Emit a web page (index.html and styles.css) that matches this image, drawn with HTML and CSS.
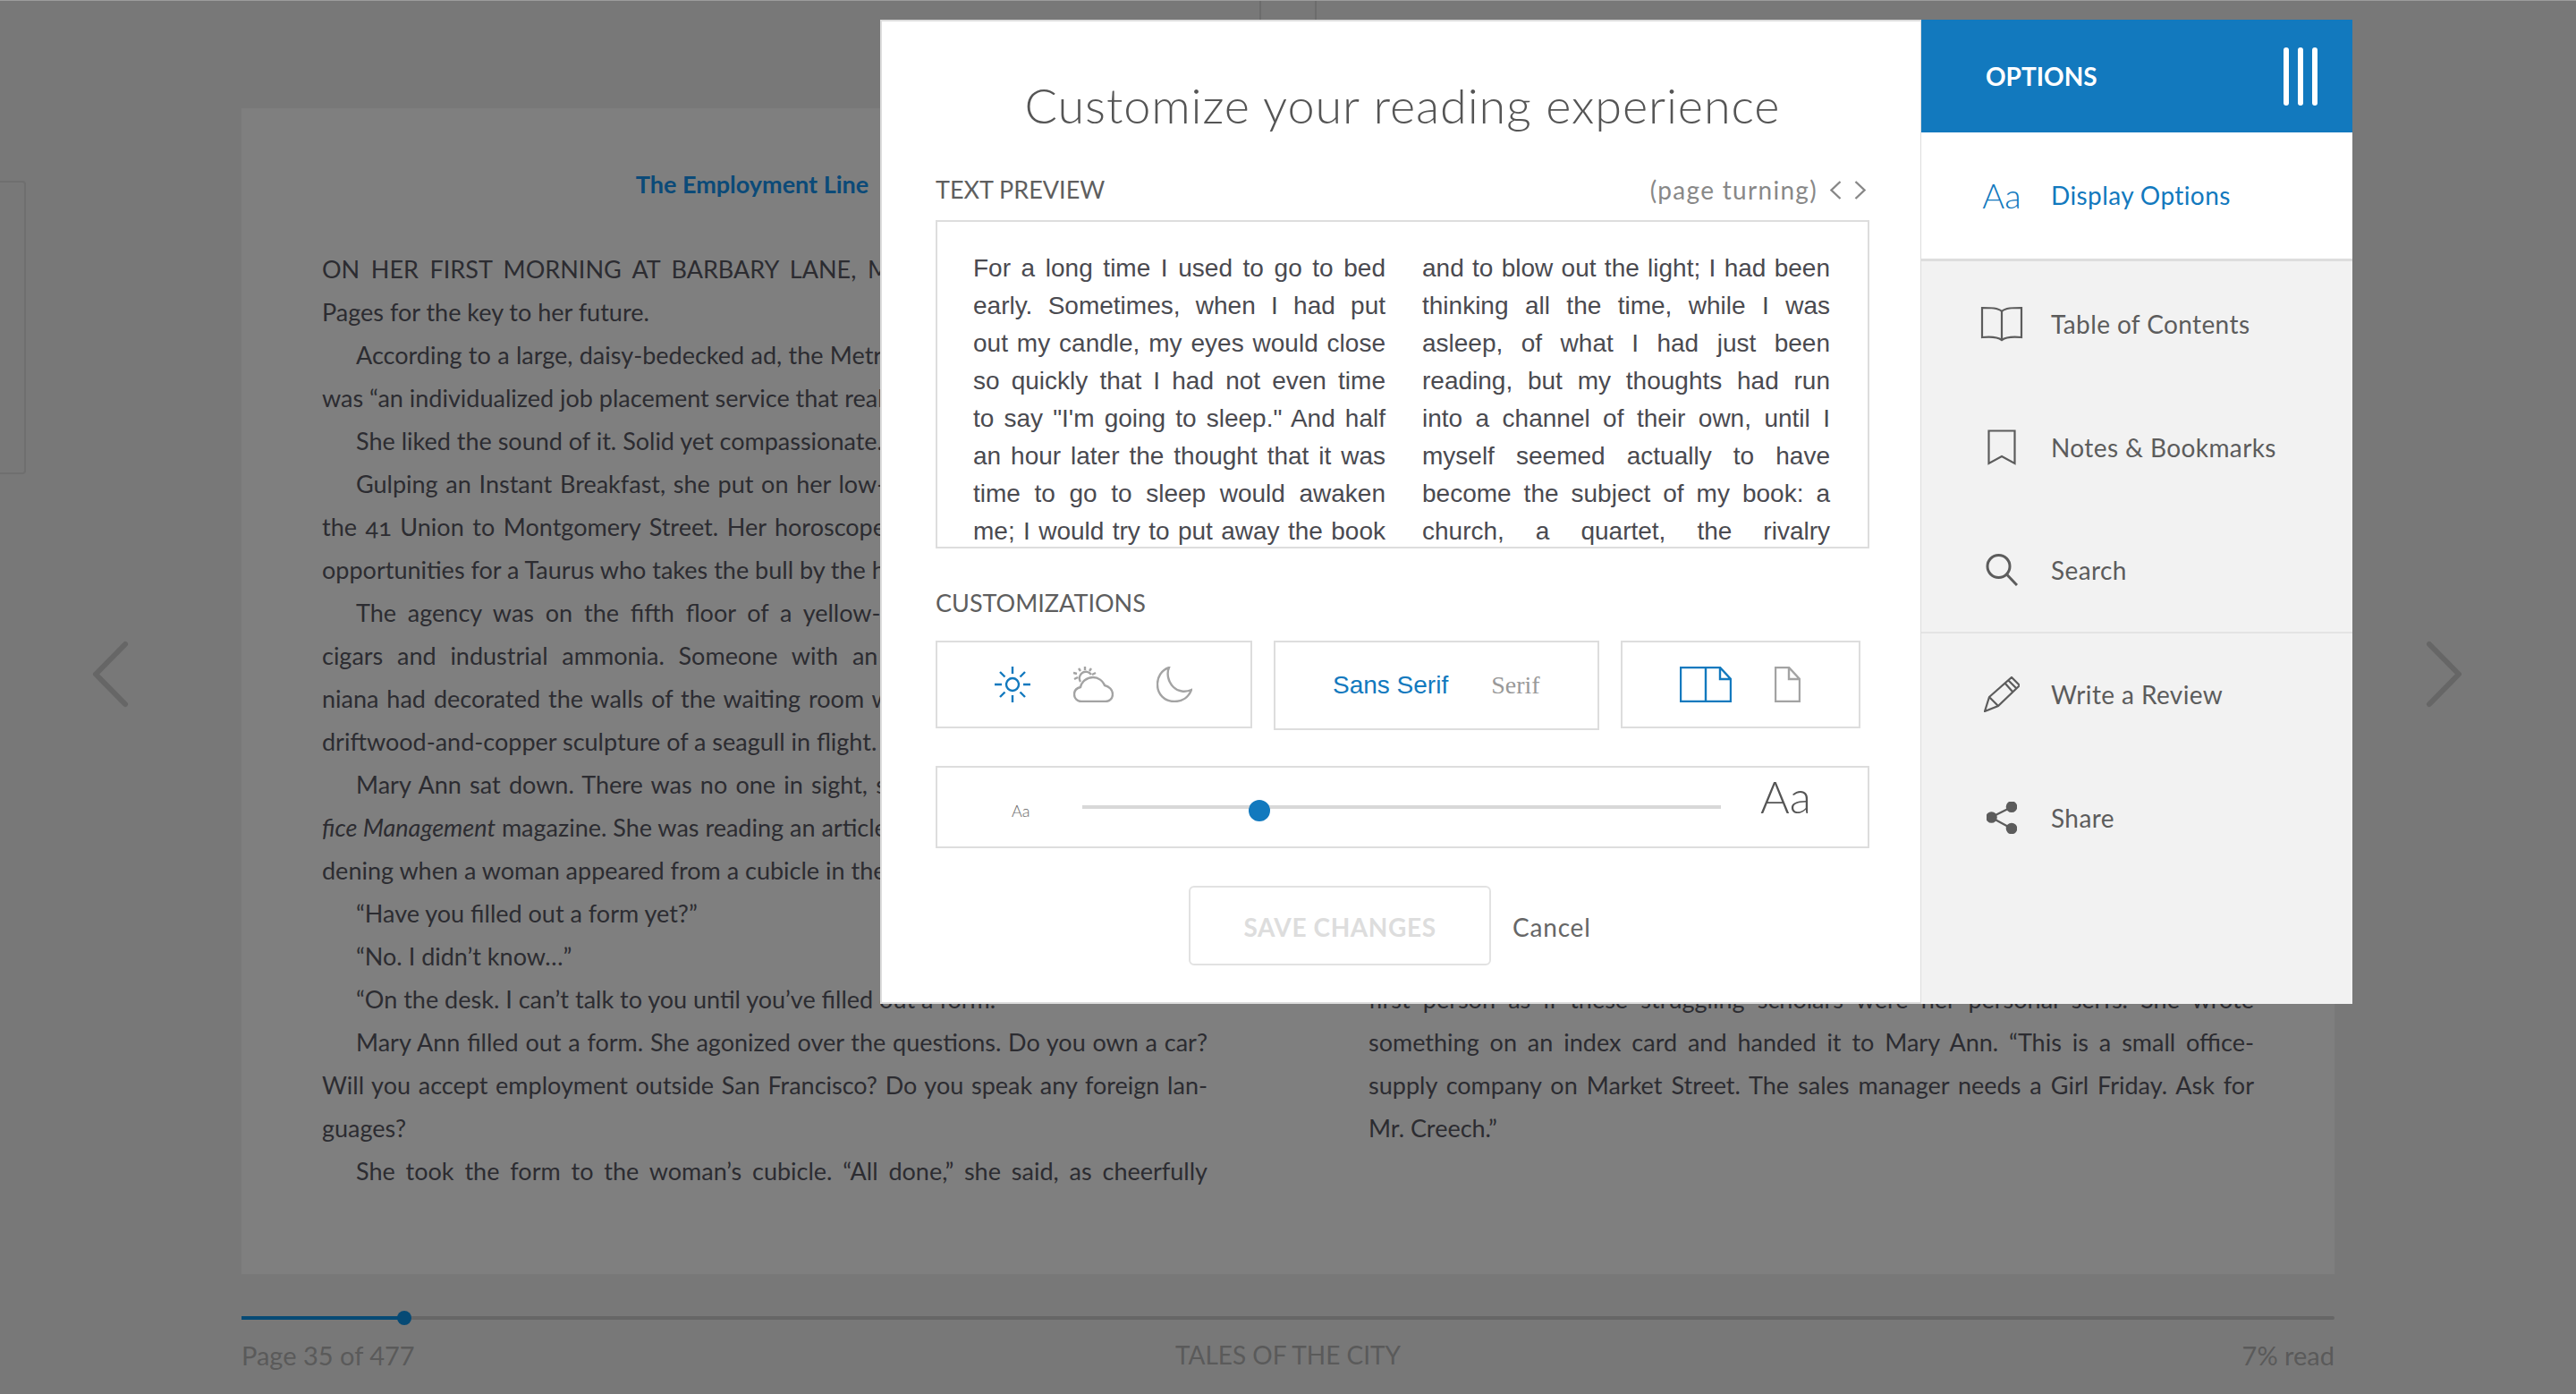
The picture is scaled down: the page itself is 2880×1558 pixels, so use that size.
FILE: index.html
```html
<!DOCTYPE html>
<html lang="en">

<head>
    <meta charset="UTF-8">
    <title>Tales of the City</title>
    <link rel="stylesheet" href="styles.css">
</head>

<body>
    <div class="side-tab"></div>
    <svg class="turn turn-left" width="42" height="75" viewBox="0 0 42 75"><path d="M38 4 L5 37.5 L38 71"/></svg>
    <svg class="turn turn-right" width="42" height="75" viewBox="0 0 42 75"><path d="M4 4 L37 37.5 L4 71"/></svg>

    <header class="topbar">
        <div class="top-btn"></div>
    </header>

    <main class="page">
        <section class="col">
            <h2 class="chapter">The Employment Line</h2>
            <div class="ln j first">ON HER FIRST MORNING AT BARBARY LANE, Mary Ann searched the Yellow</div>
            <div class="ln">Pages for the key to her future.</div>
            <div class="ln j in">According to a large, daisy-bedecked ad, the Metropolitan Personnel Agency Inc.</div>
            <div class="ln">was “an individualized job placement service that really cares.”</div>
            <div class="ln in">She liked the sound of it. Solid yet compassionate.</div>
            <div class="ln j in">Gulping an Instant Breakfast, she put on her low-heeled shoes and then caught</div>
            <div class="ln j">the 41 Union to Montgomery Street. Her horoscope in today’s Chronicle spoke of</div>
            <div class="ln">opportunities for a Taurus who takes the bull by the horns.</div>
            <div class="ln j in">The agency was on the fifth floor of a yellow-brick building that smelled of</div>
            <div class="ln j">cigars and industrial ammonia. Someone with an abiding appetite for Califor-</div>
            <div class="ln j">niana had decorated the walls of the waiting room with a large and rather hideous</div>
            <div class="ln">driftwood-and-copper sculpture of a seagull in flight.</div>
            <div class="ln j in">Mary Ann sat down. There was no one in sight, so she picked up a copy of <em>Of-</em></div>
            <div class="ln j"><em>fice Management</em> magazine. She was reading an article about indoor rooftop office gar-</div>
            <div class="ln">dening when a woman appeared from a cubicle in the corner.</div>
            <div class="ln in">“Have you filled out a form yet?”</div>
            <div class="ln in">“No. I didn’t know…”</div>
            <div class="ln in">“On the desk. I can’t talk to you until you’ve filled out a form.”</div>
            <div class="ln j in">Mary Ann filled out a form. She agonized over the questions. Do you own a car?</div>
            <div class="ln j">Will you accept employment outside San Francisco? Do you speak any foreign lan-</div>
            <div class="ln">guages?</div>
            <div class="ln j in">She took the form to the woman’s cubicle. “All done,” she said, as cheerfully</div>
        </section>
        <section class="col col-right">
            <div class="ln j">first person as if these struggling scholars were her personal serfs. She wrote</div>
            <div class="ln j">something on an index card and handed it to Mary Ann. “This is a small office-</div>
            <div class="ln j">supply company on Market Street. The sales manager needs a Girl Friday. Ask for</div>
            <div class="ln">Mr. Creech.”</div>
        </section>
    </main>

    <div class="progress">
        <div class="progress-fill"><span class="progress-knob"></span></div>
    </div>

    <footer class="status">
        <span>Page 35 of 477</span>
        <span class="status-title">TALES OF THE CITY</span>
        <span class="status-read">7% read</span>
    </footer>

    <!-- Modal -->
    <div class="modal">
        <div class="modal-main">
            <h1>Customize your reading experience</h1>

            <div class="preview-head">
                <span class="label">TEXT PREVIEW</span>
                <span class="turning">(page turning)
                    <svg width="13" height="21" viewBox="0 0 13 21"><path d="M11.5 1 L1.5 10.5 L11.5 20"/></svg>
                    <svg width="13" height="21" viewBox="0 0 13 21"><path d="M1.5 1 L11.5 10.5 L1.5 20"/></svg>
                </span>
            </div>
            <div class="preview">
                <p class="preview-left">For a long time I used to go to bed<br>early. Sometimes, when I had put<br>out my candle, my eyes would close<br>so quickly that I had not even time<br>to say "I'm going to sleep." And half<br>an hour later the thought that it was<br>time to go to sleep would awaken<br>me; I would try to put away the book</p>
                <p class="preview-right">and to blow out the light; I had been thinking all the time, while I was asleep, of what I had just been reading, but my thoughts had run into a channel of their own, until I myself seemed actually to have become the subject of my book: a church, a quartet, the rivalry between François I and Charles V.</p>
            </div>

            <div class="label label-cust">CUSTOMIZATIONS</div>
            <div class="cust-row">
                <div class="box box-theme">
                    <svg class="ic-on" width="40" height="40" viewBox="0 0 40 40">
                        <circle cx="20" cy="20" r="7"/>
                        <path d="M20 0 V8 M20 32 V40 M0 20 H8 M32 20 H40 M6 6 L11.5 11.5 M28.5 28.5 L34 34 M34 6 L28.5 11.5 M11.5 28.5 L6 34"/>
                    </svg>
                    <svg class="ic-off" width="45" height="40" viewBox="0 0 45 40">
                        <path d="M9 39 C4 39 1 35 1 31 C1 27 4 24 8 23 C9 17 15 12 22 12 C28 12 33 16 35 21 C40 22 44 26 44 31 C44 36 40 39 36 39 Z"/>
                        <path d="M8 17 A7 7 0 0 1 20 9 M13 0 V4 M6 2 L8 5 M20 2 L18 5 M0 7 L4 8 M1 14 L5 12 M25 7 L21 9"/>
                    </svg>
                    <svg class="ic-off" width="40" height="40" viewBox="0 0 40 40">
                        <path d="M14 1 C5 4 1 12 1 20 C1 31 9 39 20 39 C29 39 36 34 39 26 C32 29 24 28 19 23 C13 17 11 8 14 1 Z"/>
                    </svg>
                </div>
                <div class="box box-font">
                    <span class="font-sans">Sans Serif</span>
                    <span class="font-serif">Serif</span>
                </div>
                <div class="box box-pages">
                    <svg class="ic-on" width="58" height="40" viewBox="0 0 58 40">
                        <path d="M1 1 H45 L57 14 V39 H1 Z M29 1 V39 M45 1 V14 H57"/>
                    </svg>
                    <svg class="ic-off" width="29" height="40" viewBox="0 0 29 40">
                        <path d="M1 1 H16 L28 14 V39 H1 Z M16 1 V14 H28"/>
                    </svg>
                </div>
            </div>

            <div class="size-box">
                <span class="aa-small">Aa</span>
                <div class="slider"><span class="slider-knob"></span></div>
                <span class="aa-big">Aa</span>
            </div>

            <div class="actions">
                <button class="save">SAVE CHANGES</button>
                <span class="cancel">Cancel</span>
            </div>
        </div>

        <aside class="sidebar">
            <div class="side-head">
                <span>OPTIONS</span>
                <div class="bars"><i></i><i></i><i></i></div>
            </div>
            <div class="item item-active">
                <span class="item-icon item-aa">Aa</span>
                <span>Display Options</span>
            </div>
            <div class="item">
                <span class="item-icon">
                    <svg width="48" height="40" viewBox="0 0 48 40"><path d="M24 6 C20 2 12 2 2 2 V35 C12 34 20 35 24 38 C28 35 36 34 46 35 V2 C36 2 28 2 24 6 Z M24 6 V38"/></svg>
                </span>
                <span>Table of Contents</span>
            </div>
            <div class="item">
                <span class="item-icon">
                    <svg width="32" height="40" viewBox="0 0 32 40"><path d="M1.5 1.5 H30.5 V38 L16 30 L1.5 38 Z"/></svg>
                </span>
                <span>Notes &amp; Bookmarks</span>
            </div>
            <div class="item item-split">
                <span class="item-icon">
                    <svg class="thick" width="36" height="36" viewBox="0 0 36 36"><circle cx="14.5" cy="14" r="12.5"/><path d="M24 23.5 L35 35"/></svg>
                </span>
                <span>Search</span>
            </div>
            <div class="item">
                <span class="item-icon">
                    <svg width="40" height="40" viewBox="0 0 40 40"><path d="M1 39 L6 23 L31 1 L40 10 L16 33 Z M6 23 L16 33 M24 8 L32 17 M28 5 L36 13"/></svg>
                </span>
                <span>Write a Review</span>
            </div>
            <div class="item">
                <span class="item-icon">
                    <svg class="solid" width="34" height="36" viewBox="0 0 34 36">
                        <path d="M5 17.5 L28 6 M5 17.5 L28 30"/>
                        <circle cx="5.5" cy="17.5" r="5.2"/>
                        <circle cx="28" cy="5.7" r="5.2"/>
                        <circle cx="28" cy="30" r="5.2"/>
                    </svg>
                </span>
                <span>Share</span>
            </div>
        </aside>
    </div>
</body>

</html>
```

FILE: styles.css
```css
/* General */
* {
    box-sizing: border-box;
}

html {
    height: 1558px;
    overflow: hidden;
}

body {
    margin: 0;
    width: 2880px;
    height: 1558px;
    overflow: hidden;
    position: relative;
    background-color: #787878;
    border-top: 1px solid #9c9c9c;
    font-family: "Lato", "Liberation Sans", sans-serif;
}

/* Reader behind the modal */
.topbar {
    height: 120px;
    display: flex;
    justify-content: center;
}

.top-btn {
    width: 64px;
    height: 40px;
    border-left: 2px solid #6c6c6c;
    border-right: 2px solid #6c6c6c;
}

.side-tab {
    position: absolute;
    left: -4px;
    top: 201px;
    width: 33px;
    height: 328px;
    border: 2px solid #6f6f6f;
    border-radius: 4px;
}

.turn {
    position: absolute;
    top: 715px;
}

.turn path {
    fill: none;
    stroke: #666;
    stroke-width: 6;
    stroke-linecap: round;
    stroke-linejoin: round;
}

.turn-left {
    left: 102px;
}

.turn-right {
    left: 2712px;
}

.page {
    width: 2340px;
    height: 1303px;
    margin-left: 270px;
    padding: 62px 90px 0;
    background-color: #7f7f7f;
    display: grid;
    grid-template-columns: 990px 990px;
    column-gap: 180px;
    color: #2c2c31;
    font-size: 27px;
    line-height: 48px;
    font-variant-numeric: oldstyle-nums;
}

.col-right {
    padding-top: 910px;
}

.chapter {
    margin: 0 28px 46px 0;
    font-size: 27px;
    font-weight: 700;
    line-height: 46px;
    padding-bottom: 2px;
    text-align: center;
    color: #0b4a78;
}

.ln {
    white-space: nowrap;
    height: 48px;
}

.j {
    text-align: justify;
    text-align-last: justify;
}

.in {
    padding-left: 38px;
}

.progress {
    width: 2340px;
    height: 4px;
    margin: 47px 0 0 270px;
    background-color: #666;
    border-radius: 2px;
}

.progress-fill {
    width: 182px;
    height: 4px;
    background-color: #064a75;
    position: relative;
}

.progress-knob {
    position: absolute;
    right: -8px;
    top: -6px;
    width: 16px;
    height: 16px;
    border-radius: 50%;
    background-color: #064a75;
}

.status {
    width: 2340px;
    height: 40px;
    margin: 19px 0 0 270px;
    display: grid;
    grid-template-columns: 1fr auto 1fr;
    align-items: center;
    font-size: 29px;
    color: #5a5a5a;
}

.status-title {
    font-size: 28px;
}

.status-read {
    text-align: right;
}

/* Modal */
.modal {
    position: absolute;
    left: 984px;
    top: 21px;
    width: 1646px;
    height: 1100px;
    display: flex;
}

.modal-main {
    width: 1164px;
    padding: 0 57px 0 60px;
    background-color: #fff;
    border: 2px solid #ddd;
    border-right: 1px solid #ddd;
    color: #555;
}

h1 {
    margin: 58px 0 0;
    height: 72px;
    font-size: 54px;
    font-weight: 300;
    letter-spacing: 0.9px;
    line-height: 72px;
    text-align: center;
    color: #555;
}

.label {
    font-size: 27px;
    line-height: 40px;
    color: #5e5e5e;
}

.preview-head {
    height: 40px;
    margin-top: 38px;
    display: flex;
    justify-content: space-between;
    align-items: center;
    padding-right: 4px;
}

.turning {
    display: flex;
    align-items: center;
    gap: 14px;
    font-size: 28px;
    letter-spacing: 1.3px;
    color: #888;
}

.turning svg path {
    fill: none;
    stroke: #888;
    stroke-width: 2.4;
}

.preview {
    height: 367px;
    margin-top: 14px;
    padding: 31px 0 0 40px;
    border: 2px solid #ddd;
    display: flex;
    gap: 41px;
    overflow: hidden;
    font-family: "Liberation Sans", Arial, sans-serif;
    font-size: 28px;
    line-height: 42px;
    color: #4a4a50;
    text-align: justify;
}

.preview p {
    margin: 0;
}

.preview-left {
    width: 461px;
    flex: none;
    white-space: nowrap;
    text-align-last: justify;
}

.preview-right {
    width: 456px;
}

.label-cust {
    display: block;
    height: 40px;
    margin-top: 41px;
}

.cust-row {
    margin-top: 22px;
    display: flex;
    align-items: flex-start;
    gap: 24px;
}

.box {
    height: 98px;
    border: 2px solid #ddd;
    display: flex;
    align-items: center;
}

.box svg path,
.box svg circle {
    fill: none;
    stroke-width: 2.4;
}

.ic-on path,
.ic-on circle {
    stroke: #1279be;
}

.ic-off path,
.ic-off circle {
    stroke: #a3a3a3;
}

.box-theme {
    width: 354px;
    padding: 0 0 0 64px;
    gap: 48px;
}

.box-font {
    width: 364px;
    height: 100px;
    padding-left: 64px;
    gap: 48px;
    font-family: "Liberation Sans", Arial, sans-serif;
    font-size: 28px;
}

.font-sans {
    color: #1279be;
}

.font-serif {
    font-family: "Liberation Serif", serif;
    font-size: 28px;
    color: #999;
}

.box-pages {
    width: 268px;
    padding-left: 64px;
    gap: 48px;
}

.size-box {
    position: relative;
    height: 92px;
    margin-top: 40px;
    border: 2px solid #ddd;
}

.aa-small {
    position: absolute;
    left: 83px;
    top: 36px;
    font-size: 18px;
    font-weight: 300;
    line-height: 24px;
    color: #666;
}

.aa-big {
    position: absolute;
    left: 920px;
    top: 2px;
    font-size: 50px;
    font-weight: 300;
    line-height: 60px;
    color: #555;
}

.slider {
    position: absolute;
    left: 162px;
    top: 42px;
    width: 714px;
    height: 4px;
    background-color: #d8d8d8;
}

.slider-knob {
    position: absolute;
    left: 186px;
    top: -6px;
    width: 24px;
    height: 24px;
    border-radius: 50%;
    background-color: #1279be;
}

.actions {
    margin: 42px 0 0 283px;
    display: flex;
    align-items: center;
    gap: 24px;
}

.save {
    width: 338px;
    height: 89px;
    padding: 2px 0 0;
    background-color: #fff;
    border: 2px solid #e2e2e2;
    border-radius: 6px;
    font-family: inherit;
    font-size: 28px;
    font-weight: 700;
    letter-spacing: 0.6px;
    color: #ddd;
}

.cancel {
    padding-top: 2px;
    font-size: 28px;
    letter-spacing: 0.8px;
    color: #666;
}

/* Options sidebar */
.sidebar {
    width: 482px;
    background-color: #f2f2f2;
    color: #5c5c5c;
    font-size: 28px;
}

.side-head {
    height: 126px;
    padding: 0 39px 0 72px;
    background-color: #1279be;
    color: #fff;
    font-weight: 700;
    display: flex;
    justify-content: space-between;
    align-items: center;
}

.bars {
    display: flex;
    gap: 10px;
}

.bars i {
    width: 6px;
    height: 65px;
    border-radius: 3px;
    background-color: #fff;
}

.item {
    height: 138px;
    padding-bottom: 2px;
    display: flex;
    align-items: center;
    letter-spacing: 0.4px;
}

.item-icon {
    width: 145px;
    padding-left: 35px;
    display: flex;
    justify-content: center;
    letter-spacing: 0;
}

.item svg path,
.item svg circle {
    fill: none;
    stroke: #5c5c5c;
    stroke-width: 2.2;
}

.item svg.thick path,
.item svg.thick circle {
    stroke-width: 3;
}

.item svg.solid circle {
    fill: #5c5c5c;
}

.item-active {
    height: 144px;
    margin-bottom: 2px;
    background-color: #fff;
    border-bottom: 3px solid #ddd;
    color: #1279be;
}

.item-aa {
    font-size: 38px;
    font-weight: 300;
}

.item-split {
    border-bottom: 2px solid #e4e4e4;
}
```
